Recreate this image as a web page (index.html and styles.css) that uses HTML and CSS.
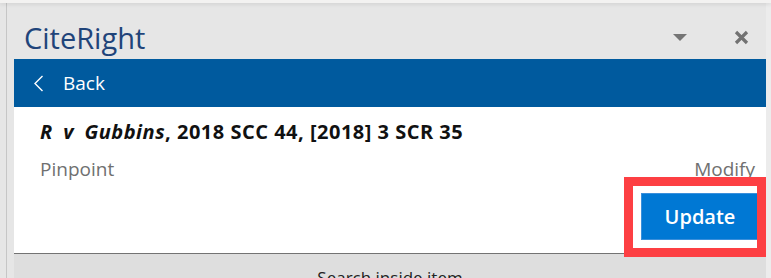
FILE: index.html
```html
<!DOCTYPE html>
<html lang="en">
<head>
  <meta charset="UTF-8">
  <meta name="viewport" content="width=device-width, initial-scale=1.0">
  <title>CiteRight</title>
  <link rel="stylesheet" href="styles.css">
</head>
<body>

  <div class="chrome-top"></div>

  <div class="frame">
    <div class="rail"></div>

    <div class="panel">
      <!-- Task pane header -->
      <div class="panel-head">
        <h1 class="title">CiteRight</h1>
        <div class="head-icons">
          <svg class="icon-caret" width="14" height="7" viewBox="0 0 14 7">
            <polygon points="0,0 14,0 7,7" fill="#757575"/>
          </svg>
          <svg class="icon-close" width="15" height="15" viewBox="0 0 15 15">
            <path d="M2 2 L13 13 M13 2 L2 13" stroke="#727272" stroke-width="3.2" fill="none"/>
          </svg>
        </div>
      </div>

      <div class="panel-body">
        <!-- Back bar -->
        <div class="nav">
          <svg class="icon-back" width="11" height="17" viewBox="0 0 11 17">
            <path d="M9.5 1 L2 8.5 L9.5 16" stroke="#fff" stroke-width="1.4" fill="none"/>
          </svg>
          <span class="nav-label">Back</span>
        </div>

        <!-- Citation details -->
        <div class="content">
          <div class="citation"><em>R&ensp;v&ensp;Gubbins</em>, 2018 SCC 44, [2018] 3 SCR 35</div>
          <div class="row">
            <span>Pinpoint</span>
            <span>Modify</span>
          </div>
          <div class="actions">
            <div class="btn-wrap">
              <button class="btn-update">Update</button>
              <div class="highlight"></div>
            </div>
          </div>
        </div>

        <div class="search">Search inside item</div>
      </div>
    </div>

    <div class="edge"></div>
  </div>

</body>
</html>
```

FILE: styles.css
```css
/* Task pane layout */
body {
  margin: 0;
  height: 100vh;
  display: flex;
  flex-direction: column;
  background-color: #e6e6e6;
  font-family: "Open Sans", "Noto Sans", Arial, sans-serif;
  overflow: hidden;
}

.chrome-top {
  height: 3px;
  flex-shrink: 0;
  background-color: #f3f2f1;
  box-shadow: 0 1px 4px rgba(0, 0, 0, 0.12);
  position: relative;
  z-index: 1;
}

.frame {
  flex: 1;
  min-height: 0;
  display: flex;
}

.rail {
  width: 6px;
  border-right: 1px solid #c6c6c6;
}

.panel {
  flex: 1;
  display: flex;
  flex-direction: column;
}

.panel-head {
  height: 56px;
  flex-shrink: 0;
  display: flex;
  justify-content: space-between;
  align-items: flex-start;
}

.title {
  margin: 0;
  padding: 19px 0 0 17px;
  font-size: 29px;
  line-height: 32px;
  font-weight: 400;
  color: #1f447a;
}

.head-icons {
  display: flex;
  align-items: center;
  padding: 27px 17px 0 0;
}

.icon-caret {
  margin-right: 47px;
}

.panel-body {
  flex: 1;
  min-height: 0;
  margin-left: 7px;
  display: flex;
  flex-direction: column;
}

.nav {
  height: 48px;
  flex-shrink: 0;
  background-color: #005a9e;
  display: flex;
  align-items: center;
  padding-left: 19px;
  color: white;
}

.nav-label {
  margin-left: 19px;
  font-size: 19px;
}

.content {
  height: 146px;
  flex-shrink: 0;
  background-color: white;
  padding: 0 11px 0 26px;
  box-sizing: border-box;
  display: flex;
  flex-direction: column;
}

.citation {
  margin-top: 11px;
  font-size: 20px;
  font-weight: 700;
  letter-spacing: 0.5px;
  color: #111;
}

.row {
  display: flex;
  justify-content: space-between;
  margin-top: 11px;
  font-size: 19px;
  color: #707070;
}

.actions {
  display: flex;
  justify-content: flex-end;
  margin-top: auto;
  margin-right: -4px;
  padding-bottom: 13px;
}

.btn-wrap {
  position: relative;
}

.btn-update {
  width: 118px;
  height: 47px;
  background-color: #0078d4;
  border: 1px solid #3a8fdb;
  color: white;
  font-family: inherit;
  font-size: 20px;
  font-weight: 600;
  cursor: pointer;
}

/* red annotation box drawn over the button */
.highlight {
  position: absolute;
  top: -16px;
  left: -17px;
  right: -7px;
  bottom: -17px;
  border: 9px solid #fd3f43;
  z-index: 2;
}

.search {
  flex: 1;
  border-top: 1px solid #737373;
  background-color: #dedede;
  text-align: center;
  padding-top: 12px;
  font-size: 17px;
  color: #222;
}

.edge {
  width: 5px;
  background-color: #ececec;
}
```
